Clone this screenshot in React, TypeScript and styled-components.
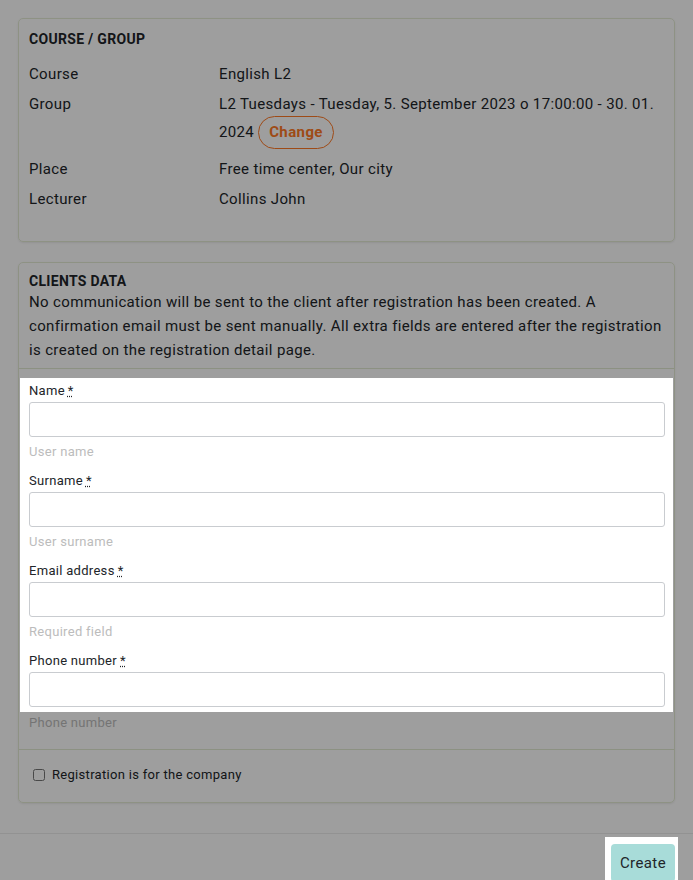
import React from 'react';
import styled, { createGlobalStyle } from 'styled-components';

const GlobalStyle = createGlobalStyle`
  html, body {
    margin: 0;
    padding: 0;
    background: #ffffff;
  }
  body {
    font-family: Roboto, 'Liberation Sans', Arial, sans-serif;
    color: #212529;
    letter-spacing: 0.3px;
  }
  * {
    box-sizing: border-box;
  }
`;

const Page = styled.div`
  padding: 18px 18px 0;
`;

const Card = styled.section<{ $gap: number }>`
  border: 1px solid #e5ecd6;
  border-radius: 5px;
  box-shadow: 0 1px 2px rgba(0, 0, 0, 0.08);
  margin-bottom: ${({ $gap }) => $gap}px;
`;

const CardHeader = styled.div<{ $divided?: boolean }>`
  padding: ${({ $divided }) => ($divided ? '9px 10px 6px' : '11px 10px 0')};
  border-bottom: ${({ $divided }) => ($divided ? '1px solid #e2ead2' : 'none')};
`;

const CardTitle = styled.h3`
  margin: 0;
  font-size: 14px;
  line-height: 18px;
  font-weight: 700;
  text-transform: uppercase;
`;

const Description = styled.p`
  margin: 0;
  font-size: 15px;
  line-height: 24px;
  letter-spacing: 0.35px;
`;

const InfoGrid = styled.dl`
  display: grid;
  grid-template-columns: 190px 1fr;
  margin: 11px 0 0;
  padding: 0 10px 27px;
  font-size: 15px;
  line-height: 28px;
  letter-spacing: 0.35px;
`;

const InfoLabel = styled.dt`
  margin: 0;
  padding: 1px 0;
`;

const InfoValue = styled.dd<{ $tall?: boolean }>`
  margin: 0;
  padding: 1px 0 ${({ $tall }) => ($tall ? 7 : 1)}px;
`;

const ChangeButton = styled.button`
  display: inline-block;
  height: 33px;
  margin: -3px 0 -2px 4px;
  padding: 0 10px;
  vertical-align: middle;
  border: 1px solid #ff7a26;
  border-radius: 17px;
  background: transparent;
  color: #ff7a26;
  font-family: inherit;
  font-size: 15px;
  line-height: 31px;
  font-weight: 700;
  letter-spacing: 0.4px;
  cursor: pointer;
`;

const FieldsArea = styled.div`
  padding: 9px 1px 16px;
  border-bottom: 1px solid #e2ead2;
`;

const Spotlight = styled.div<{ $pad: string }>`
  position: relative;
  z-index: 101;
  background: #ffffff;
  padding: ${({ $pad }) => $pad};
`;

const Field = styled.div`
  & + & {
    margin-top: 10px;
  }
`;

const FieldLabel = styled.label`
  display: block;
  font-size: 13px;
  line-height: 18px;
  margin-bottom: 2px;
`;

const Required = styled.abbr`
  margin-left: 3px;
  text-decoration: underline dotted;
  cursor: help;
`;

const TextInput = styled.input`
  display: block;
  width: 100%;
  height: 35px;
  border: 1px solid #c9ccd0;
  border-radius: 3px;
  padding: 0 10px;
  font-family: inherit;
  font-size: 14px;
`;

const Helper = styled.div<{ $flush?: boolean }>`
  margin-top: ${({ $flush }) => ($flush ? 1 : 5)}px;
  padding-left: ${({ $flush }) => ($flush ? 9 : 0)}px;
  font-size: 13px;
  line-height: 20px;
  color: #bcbcbc;
`;

const CheckRow = styled.label`
  display: flex;
  align-items: center;
  padding: 15px 10px 17px;
  font-size: 13px;
  line-height: 20px;
`;

const CheckBox = styled.input`
  width: 12px;
  height: 12px;
  margin: 0 7px 0 4px;
`;

const Footer = styled.footer`
  display: flex;
  justify-content: flex-end;
  margin-top: 30px;
  padding: 3px 15px 0;
  border-top: 1px solid #ececec;
`;

const CreateButton = styled.button`
  display: block;
  height: 38px;
  padding: 0 9px;
  border: none;
  border-radius: 4px;
  background: #a8dcd9;
  color: #212529;
  font-family: inherit;
  font-size: 15px;
  letter-spacing: 0.4px;
  cursor: pointer;
`;

const Overlay = styled.div`
  position: fixed;
  inset: 0;
  z-index: 100;
  background: rgba(0, 0, 0, 0.38);
`;

const courseRows = [
  { label: 'Course', value: 'English L2' },
  { label: 'Group', value: 'L2 Tuesdays - Tuesday, 5. September 2023 o 17:00:00 - 30. 01. 2024', change: true },
  { label: 'Place', value: 'Free time center, Our city' },
  { label: 'Lecturer', value: 'Collins John' },
];

const fields = [
  { id: 'name', label: 'Name', helper: 'User name', type: 'text' },
  { id: 'surname', label: 'Surname', helper: 'User surname', type: 'text' },
  { id: 'email', label: 'Email address', helper: 'Required field', type: 'email' },
  { id: 'phone', label: 'Phone number', helper: 'Phone number', type: 'tel' },
];

const App: React.FC = () => {
  const last = fields[fields.length - 1];

  return (
    <>
      <GlobalStyle />
      <Page>
        <Card $gap={20}>
          <CardHeader>
            <CardTitle>Course / Group</CardTitle>
          </CardHeader>
          <InfoGrid>
            {courseRows.map((row) => (
              <React.Fragment key={row.label}>
                <InfoLabel>{row.label}</InfoLabel>
                <InfoValue $tall={row.change}>
                  {row.value}
                  {row.change && <ChangeButton type="button">Change</ChangeButton>}
                </InfoValue>
              </React.Fragment>
            ))}
          </InfoGrid>
        </Card>

        <Card $gap={0}>
          <CardHeader $divided>
            <CardTitle>Clients data</CardTitle>
            <Description>
              No communication will be sent to the client after registration has been created. A confirmation
              email must be sent manually. All extra fields are entered after the registration is created on the
              registration detail page.
            </Description>
          </CardHeader>
          <FieldsArea>
            <Spotlight $pad="4px 8px 5px 9px">
              {fields.map((field) => (
                <Field key={field.id}>
                  <FieldLabel htmlFor={field.id}>
                    {field.label}
                    <Required title="required">*</Required>
                  </FieldLabel>
                  <TextInput id={field.id} type={field.type} />
                  {field !== last && <Helper>{field.helper}</Helper>}
                </Field>
              ))}
            </Spotlight>
            <Helper $flush>{last.helper}</Helper>
          </FieldsArea>
          <CheckRow>
            <CheckBox type="checkbox" />
            Registration is for the company
          </CheckRow>
        </Card>
      </Page>
      <Footer>
        <Spotlight $pad="7px 3px 7px 6px">
          <CreateButton type="button">Create</CreateButton>
        </Spotlight>
      </Footer>
      <Overlay />
    </>
  );
};

export default App;
